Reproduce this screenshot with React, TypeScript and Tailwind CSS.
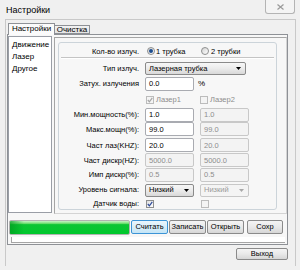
import React from 'react';

const Check = ({ on, off }: { on?: boolean; off?: boolean }) => (
  <div className={`w-[8px] h-[8px] border flex items-center justify-center ${off ? 'border-[#bcbcbc] bg-[#f4f4f4]' : 'border-[#8e8f8f] bg-gradient-to-br from-[#dedede] to-white'}`}>
    {on && (
      <svg width="6" height="6" viewBox="0 0 6 6">
        <path d="M0.8 3 L2.4 4.8 L5.3 0.8" fill="none" stroke={off ? '#a6a6a6' : '#2d4a9a'} strokeWidth="1.2" />
      </svg>
    )}
  </div>
);

const Radio = ({ on }: { on?: boolean }) => (
  <div className="w-[8px] h-[8px] rounded-full border border-[#8e8f8f] bg-gradient-to-br from-[#d4d4d4] to-white flex items-center justify-center">
    {on && <div className="w-[4px] h-[4px] rounded-full bg-[#1d4d8f]" />}
  </div>
);

const Field = ({ v, off }: { v: string; off?: boolean }) => (
  <div className={`h-[14px] w-[49px] rounded-[2px] border flex items-center pl-[3px] ${off ? 'border-[#c8c8c8] bg-[#f3f3f3] text-[#8d8d8d]' : 'border-[#a9abb1] bg-white text-black'}`}>
    {v}
  </div>
);

const Combo = ({ v, w, off }: { v: string; w: string; off?: boolean }) => (
  <div className={`h-[13px] ${w} rounded-[2px] border flex items-center justify-between pl-[3px] pr-[4px] ${off ? 'border-[#c8c8c8] bg-[#f4f4f4] text-[#9a9a9a]' : 'border-[#8a8a8a] bg-gradient-to-b from-[#f7f7f7] via-[#ebebeb] to-[#d8d8d8] text-black'}`}>
    <span>{v}</span>
    <svg width="5" height="3" viewBox="0 0 5 3">
      <path d="M0 0H5L2.5 3Z" fill={off ? '#a8a8a8' : '#000'} />
    </svg>
  </div>
);

const Row = ({ h, label, children }: { h: string; label: string; children?: React.ReactNode }) => (
  <div className={`flex items-center ${h}`}>
    <div className="w-[80px] text-right whitespace-nowrap">{label}</div>
    <div className="ml-[6px] flex items-center gap-[6px]">{children}</div>
  </div>
);

const Btn = ({ label, w, def }: { label: string; w: string; def?: boolean }) => (
  <div className={`h-[14px] ${w} rounded-[2px] border flex items-center justify-center ${def ? 'border-[#3c94d6] bg-gradient-to-b from-[#eaf6fd] to-[#c4e5f6]' : 'border-[#8a8a8a] bg-gradient-to-b from-[#f4f4f4] via-[#e9e9e9] to-[#d6d6d6]'}`}>
    {label}
  </div>
);

export default function App() {
  return (
    <div className="relative w-[300px] h-[270px] bg-[#f0f0f0] overflow-hidden font-['Liberation_Sans',Arial,sans-serif] text-[7.5px] text-black leading-none">
      <div className="h-[19px] pl-[6px] pt-[6px] text-[9px]">Настройки</div>
      <div className="absolute top-0 left-[265px] w-[30px] h-[14px] rounded-b-[3px] border border-t-0 border-[#b4b4b4] bg-[#f4f4f4] flex items-center justify-center">
        <svg width="7" height="6" viewBox="0 0 7 6">
          <path d="M0.5 0.5 L6.5 5.5 M6.5 0.5 L0.5 5.5" stroke="#9a9a9a" strokeWidth="1.2" />
        </svg>
      </div>

      <div className="ml-[5px] w-[291px] h-[247px] border-l border-t border-r border-[#c9c9c9] flex flex-col">
        {/* tabs */}
        <div className="flex items-end h-[14px] pl-[2px]">
          <div className="h-[12px] w-[47px] border border-b-0 border-[#8e9196] bg-[#fbfbfb] flex items-center justify-center text-[8px] relative z-10 -mb-px pb-px">
            Настройки
          </div>
          <div className="h-[9px] w-[35px] border border-l-0 border-[#8e9196] bg-gradient-to-b from-[#f2f2f2] to-[#e3e3e3] flex items-center justify-center text-[8px] pt-px">
            Очистка
          </div>
        </div>

        {/* tab page */}
        <div className="ml-[1px] w-[281px] h-[211px] border border-[#8e9196] bg-[#f7f7f7] flex flex-col">
          <div className="flex pt-[1px]">
            <div className="w-[44px] h-[177px] ml-[0px] border border-[#9a9ea6] bg-white pl-[3px] pt-[4px] flex flex-col gap-[4px] text-[8px]">
              <div>Движение</div>
              <div>Лазер</div>
              <div>Другое</div>
            </div>
            <div className="ml-[2px] mt-[1px] w-[233px] h-[177px] border border-[#a5a5a5] border-r-[#d4d4d4] border-b-[#d4d4d4] pl-[3px] pt-[4px]">
              <div className="w-[219px] h-[168px] rounded-[3px] border border-[#ccd4da] flex flex-col pt-[3px]">
                <Row h="h-[11px]" label="Кол-во излуч.">
                  <div className="flex items-center ml-[2px] w-[54px] gap-[1px]">
                    <Radio on />
                    <span>1 трубка</span>
                  </div>
                  <div className="flex items-center gap-[2px] -ml-[6px]">
                    <Radio />
                    <span>2 трубки</span>
                  </div>
                </Row>
                <div className="mx-[2px] h-px bg-[#c4c4c4] border-b border-white box-content" />
                <Row h="h-[19px]" label="Тип излуч.">
                  <Combo v="Лазерная трубка" w="w-[101px]" />
                </Row>
                <Row h="h-[12px]" label="Затух. излучения">
                  <Field v="0.0" />
                  <span className="-ml-[2px] text-[8px]">%</span>
                </Row>
                <Row h="h-[20px]" label="">
                  <div className="flex items-center ml-[1px] w-[54px] gap-[2px] text-[#8d8d8d]">
                    <Check on off />
                    <span>Лазер1</span>
                  </div>
                  <div className="flex items-center gap-[2px] -ml-[6px] text-[#8d8d8d]">
                    <Check off />
                    <span>Лазер2</span>
                  </div>
                </Row>
                <Row h="h-[10px]" label="Мин.мощность(%):">
                  <Field v="1.0" />
                  <Field v="1.0" off />
                </Row>
                <Row h="h-[20px]" label="Макс.мощн(%):">
                  <Field v="99.0" />
                  <Field v="99.0" off />
                </Row>
                <Row h="h-[12px]" label="Част лаз(KHZ):">
                  <Field v="20.0" />
                  <Field v="20.0" off />
                </Row>
                <Row h="h-[18px]" label="Част дискр(HZ):">
                  <Field v="5000.0" off />
                  <Field v="5000.0" off />
                </Row>
                <Row h="h-[12px]" label="Имп дискр(%):">
                  <Field v="0.5" off />
                  <Field v="0.5" off />
                </Row>
                <Row h="h-[18px]" label="Уровень сигнала:">
                  <Combo v="Низкий" w="w-[49px]" />
                  <Combo v="Низкий" w="w-[49px]" off />
                </Row>
                <Row h="h-[10px]" label="Датчик воды:">
                  <div className="ml-[1px] w-[49px]">
                    <Check on />
                  </div>
                  <Check off />
                </Row>
              </div>
            </div>
          </div>

          <div className="flex items-start mt-[6px] pl-[1px]">
            <div className="w-[121px] h-[15px] rounded-[2px] border border-[#b2b2b2] bg-[linear-gradient(to_bottom,#c8f2c8_0%,#78e278_18%,#0cc534_28%,#00c82d_100%)] relative overflow-hidden">
              <div className="absolute inset-y-0 left-0 w-[14px] bg-gradient-to-r from-[#009a1f] to-transparent opacity-70" />
            </div>
            <div className="ml-[1px] flex gap-[1px]">
              <Btn label="Считать" w="w-[37px]" def />
              <Btn label="Записать" w="w-[37px]" />
              <Btn label="Открыть" w="w-[37px]" />
              <div className="w-[1px]" />
              <Btn label="Сохр" w="w-[36px]" />
            </div>
          </div>
          <div className="ml-[3px] mt-[2px] w-[274px] h-[6px] bg-white border-l border-b border-[#a5a5a5]" />
        </div>

        <div className="flex justify-end pr-[7px] pt-[3px]">
          <div className="h-[12px] w-[52px] rounded-[2px] border border-[#8a8a8a] bg-gradient-to-b from-[#f4f4f4] via-[#e9e9e9] to-[#d6d6d6] flex items-center justify-center">
            Выход
          </div>
        </div>
      </div>
    </div>
  );
}
